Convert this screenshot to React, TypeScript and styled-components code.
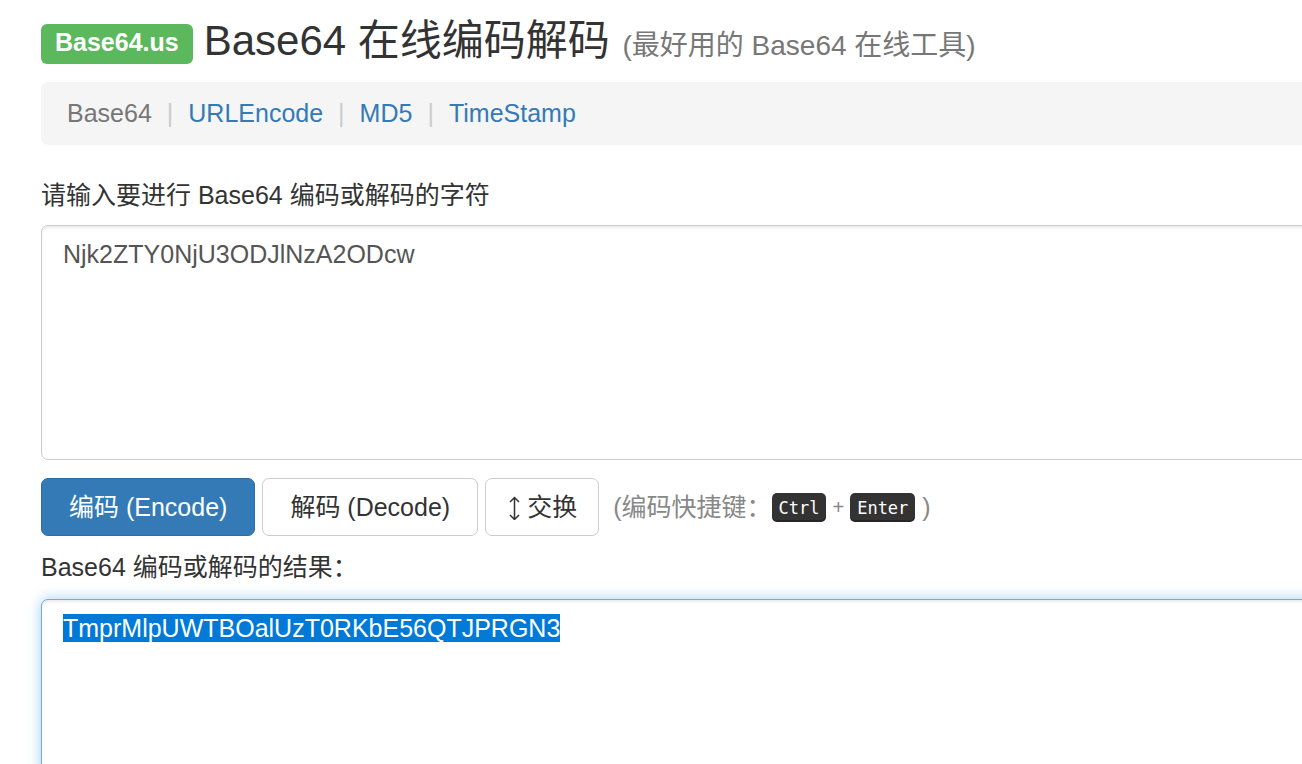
import React, { useEffect, useRef, useState } from "react";
import styled, { createGlobalStyle } from "styled-components";

const GlobalStyle = createGlobalStyle`
  * { box-sizing: border-box; }
  html, body { overflow-x: hidden; }
  html { scrollbar-width: none; }
  body {
    margin: 0;
    background: #fff;
    color: #333;
    font-family: "Liberation Sans", Arial, "Noto Sans CJK SC", sans-serif;
    font-size: 25px;
    line-height: 36px;
  }
`;

/* The content column is wider than the window and runs off its right side. */
const Page = styled.main`
  margin: 0 -32px 0 0;
  padding: 18px 0 0 41px;
`;

const Header = styled.header`
  display: flex;
  align-items: flex-start;
  gap: 11px;
  height: 64px;
`;

const Badge = styled.a`
  margin-top: 6px;
  padding: 0 14px;
  height: 40px;
  border-radius: 6px;
  background: #5cb85c;
  color: #fff;
  font-weight: bold;
  line-height: 36px;
  text-decoration: none;
`;

const Title = styled.h1`
  margin: 0;
  font-size: 42px;
  font-weight: 400;
  line-height: 46px;
  white-space: nowrap;
`;

const Subtitle = styled.small`
  margin-left: 1px;
  font-size: 28px;
  line-height: 1;
  color: #777;
`;

const Nav = styled.nav`
  padding: 13px 26px 14px;
  border-radius: 7px;
  background: #f5f5f5;
`;

const NavList = styled.ul`
  display: flex;
  margin: 0;
  padding: 0;
  list-style: none;
`;

const NavItem = styled.li`
  color: #777;

  & + &::before {
    content: "|";
    padding: 0 15px;
    color: #ccc;
  }
`;

const NavLink = styled.a`
  color: #337ab7;
  text-decoration: none;
`;

const Label = styled.label<{ $top: number; $bottom: number }>`
  display: block;
  padding: ${(p) => p.$top}px 0 ${(p) => p.$bottom}px;
`;

const TextBox = styled.textarea`
  display: block;
  width: 100%;
  height: 235px;
  padding: 14px 21px;
  border: 1px solid #ccc;
  border-radius: 7px;
  outline: 0;
  resize: none;
  background: #fff;
  color: #555;
  font: inherit;
  line-height: 28px;
  box-shadow: inset 0 2px 2px rgba(0, 0, 0, 0.075);

  &:focus {
    border-color: #66afe9;
    box-shadow: inset 0 2px 2px rgba(0, 0, 0, 0.075),
      0 0 14px rgba(102, 175, 233, 0.6);
  }

  &::selection {
    background: rgba(0, 120, 215, 0.996);
    color: #fff;
  }
`;

const Actions = styled.div`
  display: flex;
  align-items: center;
  gap: 7px;
  padding-top: 18px;
`;

const Button = styled.button<{ $primary?: boolean; $compact?: boolean }>`
  display: flex;
  align-items: center;
  gap: 7px;
  height: 58px;
  padding: 0 ${(p) => (p.$compact ? 21 : 27)}px;
  border: 1px solid ${(p) => (p.$primary ? "#2e6da4" : "#ccc")};
  border-radius: 7px;
  background: ${(p) => (p.$primary ? "#337ab7" : "#fff")};
  color: ${(p) => (p.$primary ? "#fff" : "#333")};
  font: inherit;
  white-space: nowrap;
`;

const Hint = styled.span`
  display: flex;
  align-items: center;
  margin-left: 7px;
  color: #888;
  white-space: nowrap;
`;

const Keys = styled.span`
  display: flex;
  align-items: center;
  gap: 6px;
  margin-right: 7px;
  font-size: 20px;
`;

const Key = styled.kbd`
  height: 29px;
  padding: 0 7px;
  border-radius: 5px;
  background: #333;
  color: #fff;
  font-family: "DejaVu Sans Mono", monospace;
  font-size: 17px;
  line-height: 30px;
  box-shadow: inset 0 -2px 0 rgba(0, 0, 0, 0.25);
`;

const SwapIcon = () => (
  <svg width="13" height="25" viewBox="0 0 13 25" fill="none" stroke="currentColor" strokeWidth="1.5" aria-hidden="true">
    <path d="M7.5 2.5v22M3 7 7.5 2.5 12 7M3 20 7.5 24.5 12 20" />
  </svg>
);

const links = ["URLEncode", "MD5", "TimeStamp"];

export default function App() {
  const [source, setSource] = useState("Njk2ZTY0NjU3ODJlNzA2ODcw");
  const [result, setResult] = useState("TmprMlpUWTBOalUzT0RKbE56QTJPRGN3");
  const output = useRef<HTMLTextAreaElement>(null);

  useEffect(() => {
    output.current?.focus({ preventScroll: true });
    output.current?.select();
  }, []);

  const convert = (fn: (text: string) => string) => {
    try {
      setResult(fn(source));
    } catch {
      setResult("");
    }
  };

  const swap = () => {
    setSource(result);
    setResult(source);
  };

  return (
    <>
      <GlobalStyle />
      <Page>
        <Header>
          <Badge href="#">Base64.us</Badge>
          <Title>
            Base64 在线编码解码 <Subtitle>(最好用的 Base64 在线工具)</Subtitle>
          </Title>
        </Header>
        <Nav>
          <NavList>
            <NavItem>Base64</NavItem>
            {links.map((name) => (
              <NavItem key={name}>
                <NavLink href={`#${name}`}>{name}</NavLink>
              </NavItem>
            ))}
          </NavList>
        </Nav>
        <Label htmlFor="source" $top={32} $bottom={12}>
          请输入要进行 Base64 编码或解码的字符
        </Label>
        <TextBox id="source" spellCheck={false} value={source} onChange={(e) => setSource(e.target.value)} />
        <Actions>
          <Button type="button" $primary onClick={() => convert(btoa)}>
            编码 (Encode)
          </Button>
          <Button type="button" onClick={() => convert(atob)}>
            解码 (Decode)
          </Button>
          <Button type="button" $compact onClick={swap}>
            <SwapIcon />
            交换
          </Button>
          <Hint>
            (编码快捷键：
            <Keys>
              <Key>Ctrl</Key>+<Key>Enter</Key>
            </Keys>
            )
          </Hint>
        </Actions>
        <Label htmlFor="result" $top={13} $bottom={14}>
          Base64 编码或解码的结果：
        </Label>
        <TextBox
          id="result"
          ref={output}
          spellCheck={false}
          value={result}
          onChange={(e) => setResult(e.target.value)}
        />
      </Page>
    </>
  );
}
